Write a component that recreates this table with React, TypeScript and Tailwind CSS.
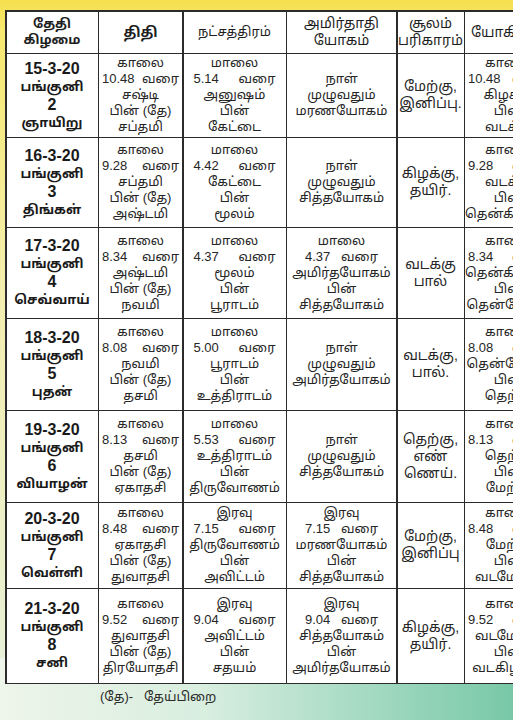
import React from "react";

const TF = '"Liberation Sans", "Noto Sans Tamil", "Lohit Tamil", "Noto Sans", "DejaVu Sans", sans-serif';

type Row = {
  h: number;
  date: string[];
  thithi: string[];
  nak: string[];
  amir: string[];
  soolam: string[];
  yogi: string[];
};

const rows: Row[] = [
  {
    h: 82.5,
    date: ["15-3-20", "பங்குனி", "2", "ஞாயிறு"],
    thithi: ["காலை", "10.48|வரை", "சஷ்டி", "பின் (தே)", "சப்தமி"],
    nak: ["மாலை", "5.14|வரை", "அனுஷம்", "பின்", "கேட்டை"],
    amir: ["நாள்", "முழுவதும்", "மரணயோகம்"],
    soolam: ["மேற்கு,", "இனிப்பு."],
    yogi: ["காலை", "10.48|வரை", "கிழக்கு", "பின்", "வடக்கு"],
  },
  {
    h: 88.5,
    date: ["16-3-20", "பங்குனி", "3", "திங்கள்"],
    thithi: ["காலை", "9.28|வரை", "சப்தமி", "பின் (தே)", "அஷ்டமி"],
    nak: ["மாலை", "4.42|வரை", "கேட்டை", "பின்", "மூலம்"],
    amir: ["நாள்", "முழுவதும்", "சித்தயோகம்"],
    soolam: ["கிழக்கு,", "தயிர்."],
    yogi: ["காலை", "9.28|வரை", "வடக்கு", "பின்", "தென்கிழக்கு"],
  },
  {
    h: 89.5,
    date: ["17-3-20", "பங்குனி", "4", "செவ்வாய்"],
    thithi: ["காலை", "8.34|வரை", "அஷ்டமி", "பின் (தே)", "நவமி"],
    nak: ["மாலை", "4.37|வரை", "மூலம்", "பின்", "பூராடம்"],
    amir: ["மாலை", "4.37|வரை", "அமிர்தயோகம்", "பின்", "சித்தயோகம்"],
    soolam: ["வடக்கு", "பால்"],
    yogi: ["காலை", "8.34|வரை", "தென்கிழக்கு", "பின்", "தென்மேற்கு"],
  },
  {
    h: 90.5,
    date: ["18-3-20", "பங்குனி", "5", "புதன்"],
    thithi: ["காலை", "8.08|வரை", "நவமி", "பின் (தே)", "தசமி"],
    nak: ["மாலை", "5.00|வரை", "பூராடம்", "பின்", "உத்திராடம்"],
    amir: ["நாள்", "முழுவதும்", "அமிர்தயோகம்"],
    soolam: ["வடக்கு,", "பால்."],
    yogi: ["காலை", "8.08|வரை", "தென்மேற்கு", "பின்", "தெற்கு"],
  },
  {
    h: 90.5,
    date: ["19-3-20", "பங்குனி", "6", "வியாழன்"],
    thithi: ["காலை", "8.13|வரை", "தசமி", "பின் (தே)", "ஏகாதசி"],
    nak: ["மாலை", "5.53|வரை", "உத்திராடம்", "பின்", "திருவோணம்"],
    amir: ["நாள்", "முழுவதும்", "சித்தயோகம்"],
    soolam: ["தெற்கு,", "எண்", "ணெய்."],
    yogi: ["காலை", "8.13|வரை", "தெற்கு", "பின்", "மேற்கு"],
  },
  {
    h: 84.5,
    date: ["20-3-20", "பங்குனி", "7", "வெள்ளி"],
    thithi: ["காலை", "8.48|வரை", "ஏகாதசி", "பின் (தே)", "துவாதசி"],
    nak: ["இரவு", "7.15|வரை", "திருவோணம்", "பின்", "அவிட்டம்"],
    amir: ["இரவு", "7.15|வரை", "மரணயோகம்", "பின்", "சித்தயோகம்"],
    soolam: ["மேற்கு,", "இனிப்பு"],
    yogi: ["காலை", "8.48|வரை", "மேற்கு", "பின்", "வடமேற்கு"],
  },
  {
    h: 93.5,
    date: ["21-3-20", "பங்குனி", "8", "சனி"],
    thithi: ["காலை", "9.52|வரை", "துவாதசி", "பின் (தே)", "திரயோதசி"],
    nak: ["இரவு", "9.04|வரை", "அவிட்டம்", "பின்", "சதயம்"],
    amir: ["இரவு", "9.04|வரை", "சித்தயோகம்", "பின்", "அமிர்தயோகம்"],
    soolam: ["கிழக்கு,", "தயிர்."],
    yogi: ["காலை", "9.52|வரை", "வடமேற்கு", "பின்", "வடகிழக்கு"],
  },
];

function Lines({ lines, spread, big }: { lines: string[]; spread: string; big?: boolean }) {
  return (
    <div
      className={`flex w-full flex-col items-stretch text-center text-[#262626] ${
        big ? "text-[14px] leading-[17px]" : "text-[13px] leading-[16px]"
      }`}
    >
      {lines.map((l, i) =>
        l.includes("|") ? (
          <div key={i} className={`flex justify-between ${spread}`}>
            <span>{l.split("|")[0]}</span>
            <span>{l.split("|")[1]}</span>
          </div>
        ) : (
          <div key={i} className="whitespace-nowrap">
            {l}
          </div>
        )
      )}
    </div>
  );
}

export default function App() {
  return (
    <div
      className="relative h-[720px] w-[513px] overflow-hidden bg-[linear-gradient(180deg,#f6e04f_0px,#f7e86e_30px,#f3eeb0_300px,#e9f0d0_620px,#e6f1e3_720px)]"
      style={{ fontFamily: TF }}
    >
      <div className="absolute bottom-0 left-0 right-0 h-[62px] bg-[linear-gradient(90deg,#eef5ea_0%,#d8eedf_40%,#9fd8bf_75%,#78c8a6_100%)]" />
      <div className="relative pl-[5px] pt-[10px]">
        <div className="w-[545px] bg-[#2b2b2b] p-[1.5px]">
          <div className="grid grid-cols-[91px_83px_102px_109px_66px_87px] gap-[1.5px]">
            {/* header */}
            <div className="flex h-[41px] flex-col items-center justify-center bg-white text-[13px] font-bold leading-[16px] text-[#1e1e1e]">
              <div>தேதி</div>
              <div>கிழமை</div>
            </div>
            <div className="flex h-[41px] items-center justify-center bg-white text-[14px] font-bold text-[#1e1e1e]">
              திதி
            </div>
            <div className="flex h-[41px] items-center justify-center bg-white text-[13px] text-[#1e1e1e]">
              நட்சத்திரம்
            </div>
            <div className="flex h-[41px] flex-col items-center justify-center bg-white text-[14px] leading-[17px] text-[#1e1e1e]">
              <div>அமிர்தாதி</div>
              <div>யோகம்</div>
            </div>
            <div className="flex h-[41px] flex-col items-center justify-center bg-white text-[14px] leading-[17px] text-[#1e1e1e]">
              <div>சூலம்</div>
              <div>பரிகாரம்</div>
            </div>
            <div className="flex h-[41px] items-center justify-start bg-white pl-[6px] text-[14px] text-[#1e1e1e]">
              யோகினி
            </div>

            {rows.map((r, idx) => (
              <React.Fragment key={idx}>
                <div
                  className="flex flex-col items-center justify-center bg-white text-[#1a1a1a]"
                  style={{ height: r.h }}
                >
                  <div className="text-[16px] font-bold leading-[19px]">{r.date[0]}</div>
                  <div className="text-[13px] font-bold leading-[18px]">{r.date[1]}</div>
                  <div className="text-[16px] font-bold leading-[17px]">{r.date[2]}</div>
                  <div className="text-[13px] font-bold leading-[19px]">{r.date[3]}</div>
                </div>
                <div className="flex items-center justify-center bg-white px-[2px]">
                  <Lines lines={r.thithi} spread="px-[1px]" />
                </div>
                <div className="flex items-center justify-center bg-white">
                  <Lines lines={r.nak} spread="px-[10px]" />
                </div>
                <div className="flex items-center justify-center bg-white">
                  <Lines lines={r.amir} spread="px-[18px]" />
                </div>
                <div className="flex items-center justify-center bg-white">
                  <Lines lines={r.soolam} spread="" big />
                </div>
                <div className="flex items-center justify-center bg-white">
                  <Lines lines={r.yogi} spread="px-[3px]" />
                </div>
              </React.Fragment>
            ))}
          </div>
        </div>
        <div className="pl-[95px] pt-[3px] text-[13px] text-[#2a2a2a]">(தே)-&nbsp;&nbsp; தேய்பிறை</div>
      </div>
    </div>
  );
}
